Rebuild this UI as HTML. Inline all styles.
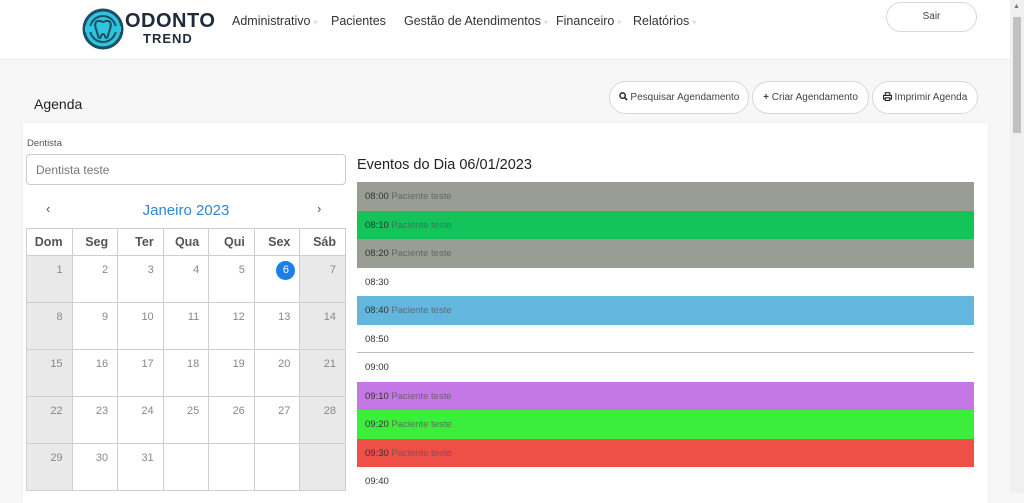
<!DOCTYPE html>
<html><head><meta charset="utf-8">
<style>
*{box-sizing:border-box;margin:0;padding:0}
body{width:1024px;height:493px;overflow:hidden;background:#f7f7f7;font-family:"Liberation Sans",sans-serif;position:relative;color:#333}
.a{position:absolute}
.hdr{left:0;top:0;width:1010px;height:60px;background:#fff;border-bottom:1px solid #ececec}
.nav{top:14px;font-size:12.5px;color:#333;white-space:nowrap}
.nav small{color:#ddd;font-size:8px;margin-left:3px}
.btn{border:1px solid #d8d8d8;border-radius:17px;background:#fff;font-size:10px;color:#444;text-align:center;line-height:31px;height:33px}
.btn svg{vertical-align:-1px}
.card{left:23px;top:123px;width:965px;height:380px;background:#fff;box-shadow:0 0 3px rgba(0,0,0,.06)}
table{border-collapse:collapse;position:absolute;left:26px;top:228px;width:320px;table-layout:fixed}
td,th{border:1px solid #cfcfcf;text-align:right;padding-right:9px}
th{height:27px;font-size:12.5px;color:#555;font-weight:bold;background:#fff}
td{height:47px;vertical-align:top;padding-top:8px;font-size:11px;color:#888}
td.w{background:#e9e9e9}
.ev{left:357px;width:617px;height:28.5px;font-size:9.5px;line-height:29px;padding-left:8px;color:#333}
.ev span{color:#555;opacity:.75}
</style></head><body>
<div class="a hdr"></div>
<svg class="a" style="left:82px;top:8px" width="42" height="42" viewBox="0 0 42 42">
<circle cx="21" cy="21" r="19" fill="#2ec4e0" stroke="#1d4f63" stroke-width="3"/>
<circle cx="21" cy="21" r="13" fill="none" stroke="#1d4f63" stroke-width="2"/>
<rect x="3" y="18" width="36" height="6" fill="#2ec4e0"/>
<path d="M14 14c2-2 5-1 7 0 2-1 5-2 7 0 2 3 0 7-1 10-1 3-1 6-3 6-1 0-1-4-3-4s-2 4-3 4c-2 0-2-3-3-6-1-3-3-7-1-10z" fill="#2ec4e0" stroke="#1d4f63" stroke-width="2"/>
</svg>
<div class="a" style="left:125px;top:10px;font-size:20px;font-weight:bold;color:#1f2b38;letter-spacing:.5px">ODONTO</div>
<div class="a" style="left:143px;top:31px;font-size:13px;font-weight:bold;color:#1f2b38;letter-spacing:1px">TREND</div>
<div class="a nav" style="left:232px">Administrativo<small>▾</small></div>
<div class="a nav" style="left:331px">Pacientes</div>
<div class="a nav" style="left:404px">Gestão de Atendimentos<small>▾</small></div>
<div class="a nav" style="left:556px">Financeiro<small>▾</small></div>
<div class="a nav" style="left:633px">Relatórios<small>▾</small></div>
<div class="a btn" style="left:886px;top:2px;width:91px;height:30px;line-height:28px;border-radius:15px;font-size:10px">Sair</div>
<div class="a" style="left:1010px;top:0;width:14px;height:493px;background:#f0f0f0"></div>
<div class="a" style="left:1013px;top:17px;width:8px;height:116px;background:#c1c1c1"></div>
<div class="a" style="left:1013px;top:3px;font-size:7px;color:#777">▲</div>

<div class="a" style="left:34px;top:96px;font-size:14px;color:#222">Agenda</div>
<div class="a btn" style="left:609px;top:81px;width:140px"><svg width="9" height="9" viewBox="0 0 10 10"><circle cx="4" cy="4" r="3" fill="none" stroke="#222" stroke-width="1.6"/><path d="M6.2 6.2L9 9" stroke="#222" stroke-width="1.8"/></svg> Pesquisar Agendamento</div>
<div class="a btn" style="left:752px;top:81px;width:117px"><b>+</b> Criar Agendamento</div>
<div class="a btn" style="left:872px;top:81px;width:106px"><svg width="9" height="9" viewBox="0 0 10 10"><rect x="2.5" y="0.8" width="5" height="3" fill="none" stroke="#222" stroke-width="1.2"/><rect x="0.6" y="3.8" width="8.8" height="4" fill="none" stroke="#222" stroke-width="1.2"/><rect x="2.5" y="6.5" width="5" height="3" fill="#fff" stroke="#222" stroke-width="1.2"/></svg> Imprimir Agenda</div>

<div class="a card"></div>
<div class="a" style="left:27px;top:138px;font-size:9.5px;color:#555">Dentista</div>
<div class="a" style="left:26px;top:154px;width:320px;height:31px;border:1px solid #ccc;border-radius:4px;font-size:12px;color:#777;padding:8px 9px">Dentista teste</div>
<div class="a" style="left:46px;top:201px;font-size:13px;color:#555">‹</div>
<div class="a" style="left:317px;top:201px;font-size:13px;color:#555">›</div>
<div class="a" style="left:26px;top:202px;width:320px;text-align:center;font-size:15px;color:#2f86d6">Janeiro 2023</div>
<table>
<tr><th>Dom</th><th>Seg</th><th>Ter</th><th>Qua</th><th>Qui</th><th>Sex</th><th>Sáb</th></tr>
<tr><td class="w">1</td><td>2</td><td>3</td><td>4</td><td>5</td><td><span style="display:inline-block;width:19px;height:19px;border-radius:50%;background:#1a7fe8;color:#fff;text-align:center;line-height:19px;margin-top:-3px;margin-right:-5px">6</span></td><td class="w">7</td></tr>
<tr><td class="w">8</td><td>9</td><td>10</td><td>11</td><td>12</td><td>13</td><td class="w">14</td></tr>
<tr><td class="w">15</td><td>16</td><td>17</td><td>18</td><td>19</td><td>20</td><td class="w">21</td></tr>
<tr><td class="w">22</td><td>23</td><td>24</td><td>25</td><td>26</td><td>27</td><td class="w">28</td></tr>
<tr><td class="w">29</td><td>30</td><td>31</td><td></td><td></td><td></td><td class="w"></td></tr>
</table>

<div class="a" style="left:357px;top:157px;font-size:14.5px;color:#222">Eventos do Dia 06/01/2023</div>
<div class="a ev" style="top:182px;background:#9a9d94">08:00 <span>Paciente teste</span></div>
<div class="a ev" style="top:210.5px;background:#14c45b">08:10 <span>Paciente teste</span></div>
<div class="a ev" style="top:239px;background:#9a9d94">08:20 <span>Paciente teste</span></div>
<div class="a ev" style="top:267.5px">08:30</div>
<div class="a ev" style="top:296px;background:#63b6dd">08:40 <span>Paciente teste</span></div>
<div class="a ev" style="top:324.5px;border-bottom:1px solid #bbb">08:50</div>
<div class="a ev" style="top:353px">09:00</div>
<div class="a ev" style="top:381.5px;background:#c378e5">09:10 <span>Paciente teste</span></div>
<div class="a ev" style="top:410px;background:#3ded3b">09:20 <span>Paciente teste</span></div>
<div class="a ev" style="top:438.5px;background:#ee4f47">09:30 <span>Paciente teste</span></div>
<div class="a ev" style="top:467px">09:40</div>
</body></html>
